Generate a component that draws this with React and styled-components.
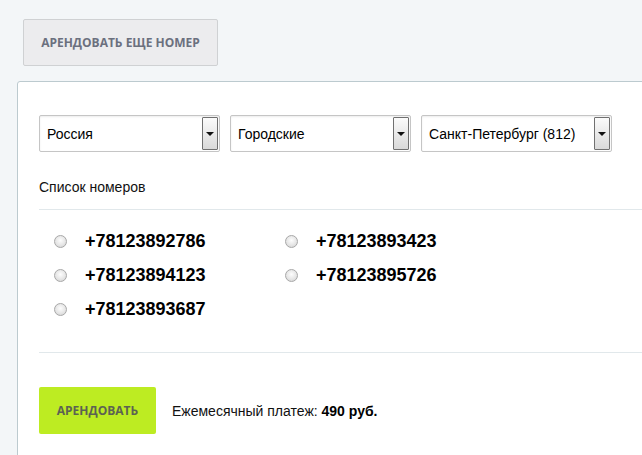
import React from "react";
import styled, { createGlobalStyle } from "styled-components";

const Global = createGlobalStyle`
  html, body { margin: 0; padding: 0; background: #f3f6f8; }
  body { font-family: "Liberation Sans", Arial, sans-serif; overflow: hidden; }
  #root { width: 642px; height: 455px; overflow: hidden; }
`;

const Page = styled.div`
  display: flex;
  flex-direction: column;
  align-items: flex-start;
  padding: 19px 0 0 17px;
  width: 760px;
`;

const GrayButton = styled.button`
  margin-left: 6px;
  width: 195px;
  height: 47px;
  background: #ececee;
  border: 1px solid #cfd1d3;
  border-radius: 2px;
  font-family: "Open Sans", sans-serif;
  font-weight: 700;
  font-size: 12px;
  color: #6b707e;
  text-transform: uppercase;
  padding: 0;
  cursor: pointer;
`;

const Panel = styled.div`
  margin-top: 15px;
  width: 720px;
  background: #fff;
  border: 1px solid #bccacf;
  border-radius: 3px;
  padding: 33px 0 0 21px;
  box-sizing: border-box;
  height: 420px;
`;

const SelectRow = styled.div`
  display: flex;
  gap: 10px;
`;

const SelectBox = styled.div`
  width: ${(p) => p.w}px;
  height: 37px;
  box-sizing: border-box;
  border: 1px solid #c5c5c5;
  border-radius: 2px;
  box-shadow: inset 0 1px 2px rgba(0,0,0,0.08);
  background: #fff;
  display: flex;
  align-items: center;
  justify-content: space-between;
  padding: 1px 1px 1px 7px;
  font-size: 14px;
  color: #000;
`;

const Arrow = styled.div`
  width: 16px;
  height: 33px;
  box-sizing: border-box;
  border: 1px solid #707070;
  border-radius: 1px;
  background: linear-gradient(#fbfbfb, #d9d9d9);
  display: flex;
  align-items: center;
  justify-content: center;
  &::after {
    content: "";
    border-left: 4px solid transparent;
    border-right: 4px solid transparent;
    border-top: 4px solid #111;
  }
`;

const Label = styled.div`
  margin-top: 27px;
  font-size: 14px;
  color: #111;
`;

const Divider = styled.div`
  height: 1px;
  background: #e1e8eb;
  margin-top: ${(p) => p.mt}px;
`;

const NumbersGrid = styled.div`
  display: grid;
  grid-template-columns: 231px 231px;
  row-gap: 13px;
  padding: 21px 0 0 15px;
`;

const NumberItem = styled.label`
  display: flex;
  align-items: center;
  gap: 18px;
  height: 21px;
  font-weight: 700;
  font-size: 18px;
  color: #000;
`;

const Radio = styled.span`
  width: 11px;
  height: 11px;
  border-radius: 50%;
  border: 1px solid #a8a8a8;
  background: radial-gradient(circle at 50% 40%, #fdfdfd 0%, #e6e6e6 55%, #cfcfcf 100%);
  flex: none;
`;

const Footer = styled.div`
  display: flex;
  align-items: center;
  gap: 16px;
  margin-top: 34px;
`;

const GreenButton = styled.button`
  width: 117px;
  height: 47px;
  background: #bdec22;
  border: none;
  border-radius: 2px;
  font-family: "Open Sans", sans-serif;
  font-weight: 700;
  font-size: 12px;
  color: #5c6252;
  text-transform: uppercase;
  padding: 0;
`;

const Price = styled.div`
  font-size: 14px;
  color: #111;
  b { color: #000; }
`;

const numbers = [
  "+78123892786",
  "+78123893423",
  "+78123894123",
  "+78123895726",
  "+78123893687",
];

export default function App() {
  return (
    <>
      <Global />
      <Page>
        <GrayButton>Арендовать еще номер</GrayButton>
        <Panel>
          <SelectRow>
            <SelectBox w={181}>Россия<Arrow /></SelectBox>
            <SelectBox w={181}>Городские<Arrow /></SelectBox>
            <SelectBox w={191}>Санкт-Петербург (812)<Arrow /></SelectBox>
          </SelectRow>
          <Label>Список номеров</Label>
          <Divider mt={14} />
          <NumbersGrid>
            {numbers.map((n) => (
              <NumberItem key={n}>
                <Radio />
                {n}
              </NumberItem>
            ))}
          </NumbersGrid>
          <Divider mt={32} />
          <Footer>
            <GreenButton>Арендовать</GreenButton>
            <Price>
              Ежемесячный платеж: <b>490 руб.</b>
            </Price>
          </Footer>
        </Panel>
      </Page>
    </>
  );
}
